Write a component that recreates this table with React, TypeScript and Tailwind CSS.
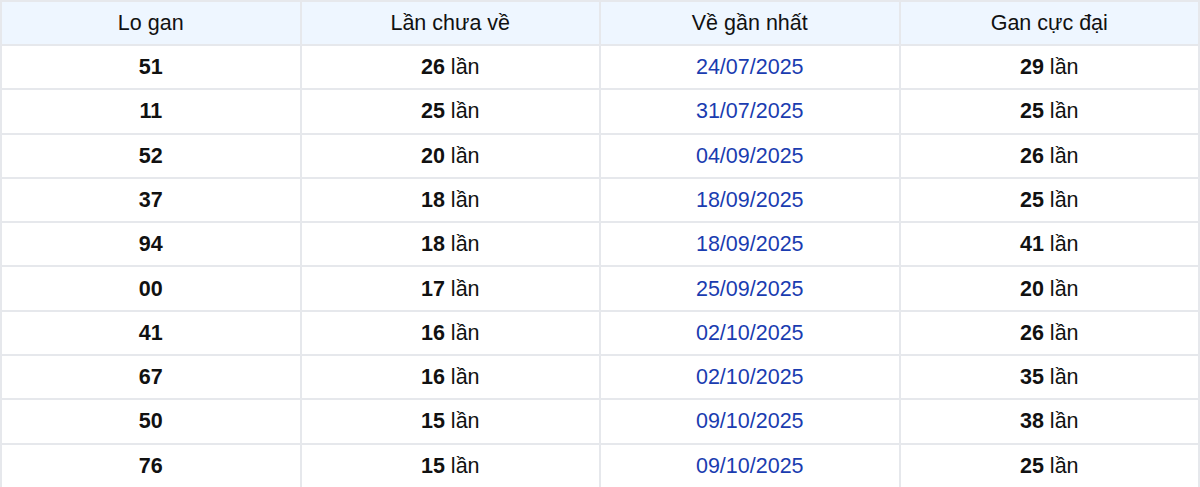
const rows = [
  { lo: "51", chua: 26, date: "24/07/2025", max: 29 },
  { lo: "11", chua: 25, date: "31/07/2025", max: 25 },
  { lo: "52", chua: 20, date: "04/09/2025", max: 26 },
  { lo: "37", chua: 18, date: "18/09/2025", max: 25 },
  { lo: "94", chua: 18, date: "18/09/2025", max: 41 },
  { lo: "00", chua: 17, date: "25/09/2025", max: 20 },
  { lo: "41", chua: 16, date: "02/10/2025", max: 26 },
  { lo: "67", chua: 16, date: "02/10/2025", max: 35 },
  { lo: "50", chua: 15, date: "09/10/2025", max: 38 },
  { lo: "76", chua: 15, date: "09/10/2025", max: 25 },
];

const cell = "border-2 border-[#e6e8ec] text-center align-middle p-0";

export default function App() {
  return (
    <div className="w-[1200px] h-[487px] overflow-hidden bg-white font-['Liberation_Sans',Arial,sans-serif] text-[21.5px] text-[#111]">
      <table className="w-full border-collapse table-fixed">
        <thead>
          <tr className="h-[44px] bg-[#eef6ff]">
            <th className={`${cell} font-normal`}>Lo gan</th>
            <th className={`${cell} font-normal`}>Lần chưa về</th>
            <th className={`${cell} font-normal`}>Về gần nhất</th>
            <th className={`${cell} font-normal`}>Gan cực đại</th>
          </tr>
        </thead>
        <tbody>
          {rows.map((r, i) => (
            <tr key={i} className="h-[44.3px]">
              <td className={`${cell} font-bold`}>{r.lo}</td>
              <td className={cell}>
                <span className="font-bold">{r.chua}</span> lần
              </td>
              <td className={`${cell} text-[#1a3cb0]`}>{r.date}</td>
              <td className={cell}>
                <span className="font-bold">{r.max}</span> lần
              </td>
            </tr>
          ))}
        </tbody>
      </table>
    </div>
  );
}
